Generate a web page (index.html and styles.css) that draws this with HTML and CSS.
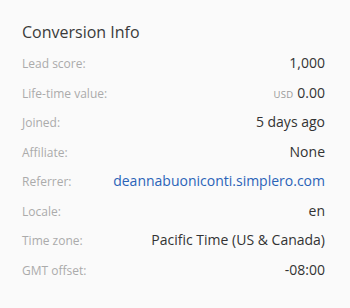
FILE: index.html
```html
<!DOCTYPE html>
<html>
<head>
    <title>Conversion Info</title>
    <link rel="stylesheet" href="styles.css">
</head>
<body>
    <div id="conversion-info">
        <h2>Conversion Info</h2>
        <div class="info-row">
            <span class="info-label">Lead score:</span>
            <span class="info-value">1,000</span>
        </div>
        <div class="info-row">
            <span class="info-label">Life-time value:</span>
            <span class="info-value"><span class="currency">USD</span> 0.00</span>
        </div>
        <div class="info-row">
            <span class="info-label">Joined:</span>
            <span class="info-value">5 days ago</span>
        </div>
        <div class="info-row">
            <span class="info-label">Affiliate:</span>
            <span class="info-value">None</span>
        </div>
        <div class="info-row">
            <span class="info-label">Referrer:</span>
            <a class="info-value link" href="#">deannabuoniconti.simplero.com</a>
        </div>
        <div class="info-row">
            <span class="info-label">Locale:</span>
            <span class="info-value">en</span>
        </div>
        <div class="info-row">
            <span class="info-label">Time zone:</span>
            <span class="info-value">Pacific Time (US &amp; Canada)</span>
        </div>
        <div class="info-row">
            <span class="info-label">GMT offset:</span>
            <span class="info-value">-08:00</span>
        </div>
    </div>
</body>
</html>
```

FILE: styles.css
```css
body {
    font-family: "Open Sans", sans-serif;
    margin: 0;
    padding: 0;
    background-color: #fafafa;
    color: #333;
}

#conversion-info {
    padding: 23px 25px 20px 22px;
}

#conversion-info h2 {
    font-size: 16px;
    font-weight: normal;
    color: #3a3a3a;
    margin: 0 0 6px 0;
    line-height: 19px;
}

.info-row {
    display: flex;
    justify-content: space-between;
    align-items: baseline;
    height: 29.5px;
    line-height: 29.5px;
}

.info-label {
    font-size: 12px;
    color: #ababab;
}

.info-value {
    font-size: 14px;
    color: #333;
}

.currency {
    font-size: 9.5px;
    letter-spacing: 0.4px;
    color: #999;
}

.link {
    color: #2a63b8;
    text-decoration: none;
}
```
